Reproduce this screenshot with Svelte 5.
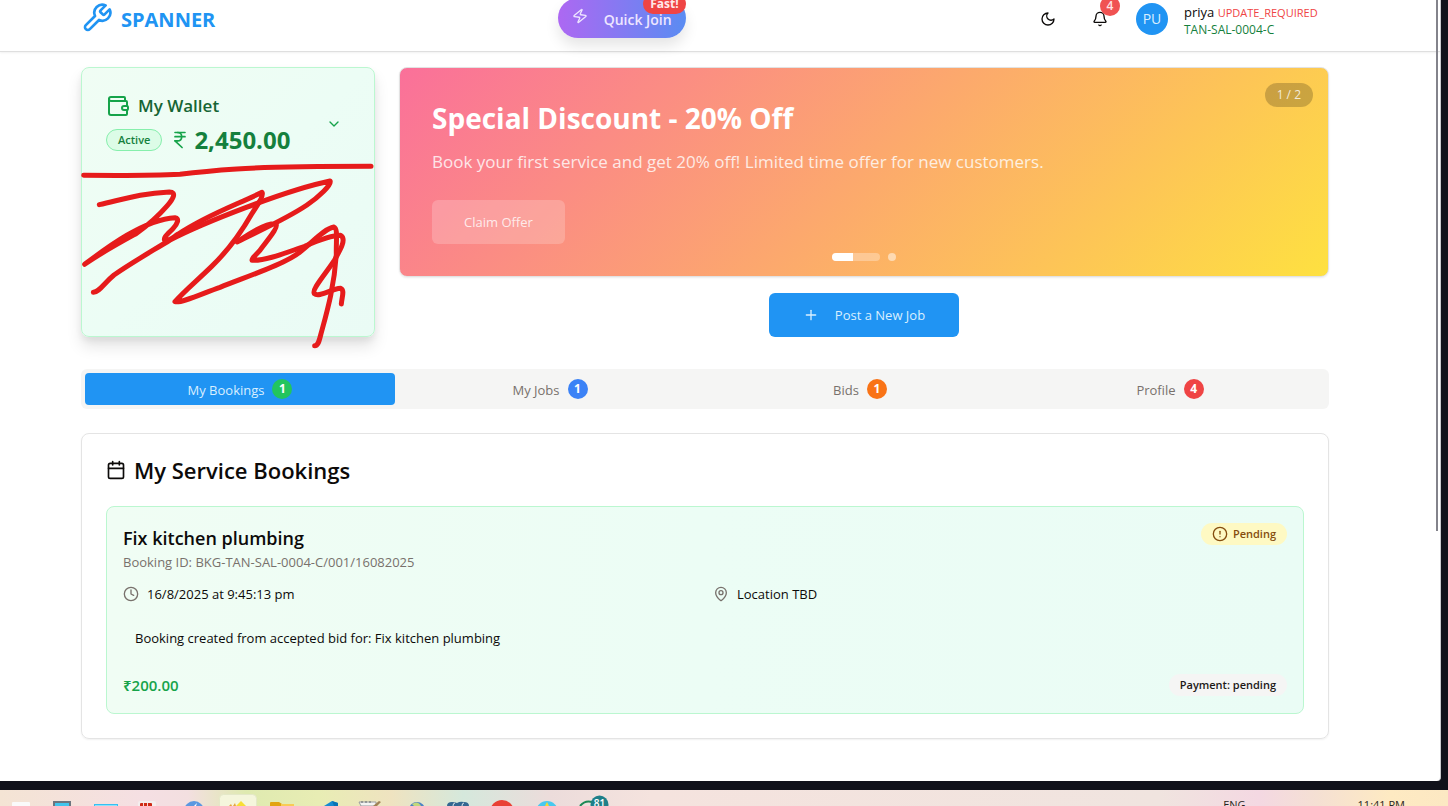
<script>
  const tabs = [
    { label: 'My Bookings', count: 1, tone: 'green' },
    { label: 'My Jobs', count: 1, tone: 'blue' },
    { label: 'Bids', count: 1, tone: 'orange' },
    { label: 'Profile', count: 4, tone: 'red' }
  ];
  let active = $state(0);

  const icons = {
    wrench: ['M14.7 6.3a1 1 0 0 0 0 1.4l1.6 1.6a1 1 0 0 0 1.4 0l3.77-3.77a6 6 0 0 1-7.94 7.94l-6.91 6.91a2.12 2.12 0 0 1-3-3l6.91-6.91a6 6 0 0 1 7.94-7.94l-3.76 3.76z'],
    zap: ['M4 14a1 1 0 0 1-.78-1.63l9.9-10.2a.5.5 0 0 1 .86.46l-1.92 6.02A1 1 0 0 0 13 10h7a1 1 0 0 1 .78 1.63l-9.9 10.2a.5.5 0 0 1-.86-.46l1.92-6.02A1 1 0 0 0 11 14z'],
    moon: ['M12 3a6 6 0 0 0 9 9 9 9 0 1 1-9-9Z'],
    bell: ['M10.268 21a2 2 0 0 0 3.464 0', 'M3.262 15.326A1 1 0 0 0 4 17h16a1 1 0 0 0 .74-1.673C19.41 13.956 18 12.499 18 8A6 6 0 0 0 6 8c0 4.499-1.411 5.956-2.738 7.326'],
    wallet: ['M19 7V4a1 1 0 0 0-1-1H5a2 2 0 0 0 0 4h15a1 1 0 0 1 1 1v4h-3a2 2 0 0 0 0 4h3a1 1 0 0 0 1-1v-2a1 1 0 0 0-1-1', 'M3 5v14a2 2 0 0 0 2 2h15a1 1 0 0 0 1-1v-4'],
    rupee: ['M6 3h12', 'M6 8h12', 'm6 13 8.5 8', 'M6 13h3', 'M9 13c6.667 0 6.667-10 0-10'],
    chevron: ['m6 9 6 6 6-6'],
    plus: ['M5 12h14', 'M12 5v14'],
    calendar: ['M8 2v4', 'M16 2v4', 'M5 4h14a2 2 0 0 1 2 2v14a2 2 0 0 1-2 2H5a2 2 0 0 1-2-2V6a2 2 0 0 1 2-2z', 'M3 10h18'],
    clock: ['M12 2a10 10 0 1 0 0 20 10 10 0 1 0 0-20', 'M12 6v6l4 2'],
    pin: ['M20 10c0 4.993-5.539 10.193-7.399 11.799a1 1 0 0 1-1.202 0C9.539 20.193 4 14.993 4 10a8 8 0 0 1 16 0', 'M12 7a3 3 0 1 0 0 6 3 3 0 1 0 0-6'],
    alert: ['M12 2a10 10 0 1 0 0 20 10 10 0 1 0 0-20', 'M12 8v4', 'M12 16h.01']
  };
</script>

{#snippet icon(name, size)}
  <svg class="icon" width={size} height={size} viewBox="0 0 24 24" aria-hidden="true">
    {#each icons[name] as d}<path {d} />{/each}
  </svg>
{/snippet}

<div class="screen">
  <div class="window">
    <div class="thumb"></div>
    <header>
      <a class="brand" href="#home">{@render icon('wrench', 32)}<span>SPANNER</span></a>
      <button class="quick">
        <span class="bolt">{@render icon('zap', 16)}</span>
        <span class="quick-label">Quick Join</span>
        <span class="fast">Fast!</span>
      </button>
      <div class="actions">
        <button class="square" aria-label="Toggle theme">{@render icon('moon', 16)}</button>
        <button class="square" aria-label="Notifications">{@render icon('bell', 16)}<span class="notif">4</span></button>
        <button class="user">
          <span class="avatar">PU</span>
          <span class="who">
            <span class="name">priya <span class="required">UPDATE_REQUIRED</span></span>
            <span class="uid">TAN-SAL-0004-C</span>
          </span>
        </button>
      </div>
    </header>

    <main>
      <div class="top">
        <section class="wallet">
          <div class="wallet-head">
            <div>
              <h2>{@render icon('wallet', 24)}<span>My Wallet</span></h2>
              <div class="balance">
                <span class="pill active-pill">Active</span>
                {@render icon('rupee', 20)}
                <strong>2,450.00</strong>
              </div>
            </div>
            <button class="expand" aria-label="Expand wallet">{@render icon('chevron', 16)}</button>
          </div>
          <svg class="ink" viewBox="81 67 294 270" aria-hidden="true">
            <g transform="translate(70 155) scale(.33333)">
              <path d="M41 61C150 62 250 62 330 58C400 49 440 46 500 42C580 36 680 34 903 34" />
              <path d="M88 149C160 133 210 115 298 111C322 111 308 134 292 152C265 183 240 206 200 235C140 268 92 294 44 328C100 286 220 193 315 188C329 190 323 207 308 222C292 238 278 249 285 257C297 258 310 246 325 237C410 180 500 149 576 112C583 120 562 151 545 177C518 224 471 290 425 334C382 376 342 409 315 440C334 445 400 414 450 397C540 361 647 326 690 291C728 262 761 222 792 216C804 220 798 257 799 298C792 401 770 473 752 540C747 560 744 572 734 572" />
              <path d="M70 412C90 410 98 388 132 360C188 321 245 289 300 255C400 203 650 105 780 78C788 87 745 127 711 150C650 191 573 225 501 261C540 235 577 209 617 205C628 214 598 249 575 279C565 296 545 306 546 316C590 317 650 292 704 274C750 254 787 241 812 241C830 252 812 283 793 316C765 359 724 404 733 416C747 428 783 402 812 400C825 405 815 429 814 447" />
            </g>
          </svg>
        </section>

        <div class="promo-col">
          <section class="promo">
            <h1>Special Discount - 20% Off</h1>
            <p>Book your first service and get 20% off! Limited time offer for new customers.</p>
            <button class="claim">Claim Offer</button>
            <span class="page-count">1 / 2</span>
            <div class="dots"><span class="bar"><span></span></span><span class="dot"></span></div>
          </section>
          <button class="post">{@render icon('plus', 16)}<span>Post a New Job</span></button>
        </div>
      </div>

      <div class="tabs" role="tablist">
        {#each tabs as tab, i}
          <button role="tab" aria-selected={active === i} class:selected={active === i} onclick={() => (active = i)}>
            <span class="tab-label">{tab.label}</span><span class="count {tab.tone}">{tab.count}</span>
          </button>
        {/each}
      </div>

      <section class="bookings">
        <h2>{@render icon('calendar', 20)}<span>My Service Bookings</span></h2>
        <article>
          <div class="row">
            <div>
              <h3>Fix kitchen plumbing</h3>
              <p class="bid">Booking ID: BKG-TAN-SAL-0004-C/001/16082025</p>
            </div>
            <span class="pill pending">{@render icon('alert', 16)}Pending</span>
          </div>
          <div class="facts">
            <span>{@render icon('clock', 16)}16/8/2025 at 9:45:13 pm</span>
            <span>{@render icon('pin', 16)}Location TBD</span>
          </div>
          <p class="note">Booking created from accepted bid for: Fix kitchen plumbing</p>
          <div class="row foot">
            <strong>₹200.00</strong>
            <span class="pill payment">Payment: pending</span>
          </div>
        </article>
      </section>
    </main>
  </div>

  <footer>
    <svg class="apps" width="640" height="16" viewBox="0 790 640 16" aria-hidden="true">
      <rect x="12" y="802" width="18" height="8" rx="1" fill="#fafafa" />
      <rect x="53" y="801" width="18" height="8" fill="#6c757f" /><rect x="55" y="803" width="14" height="6" fill="#42c5ed" />
      <rect x="94" y="804" width="24" height="5" fill="#36c0f2" /><rect x="95" y="805" width="22" height="3" fill="#8de2fb" />
      <rect x="138" y="801" width="18" height="9" rx="2" fill="#f4eeee" />
      <path d="M140 806v-2q0-1 1-1h10q1 0 1 1v2z" fill="#cf2a15" /><path d="M143.500 803v3M147.500 803v3" stroke="#f6d7d2" />
      <circle cx="194" cy="811" r="10" fill="#5c98e0" /><path d="M194 806l3-3-1 3z" fill="#fff" />
      <rect x="219.500" y="794.500" width="37" height="20" rx="4" fill="#f5f6dc" stroke="#e4e8c8" />
      <path d="M229 806l2-2 1 2zM233 806l2-3 1 3z" fill="#e8a33b" /><path d="M236 806l5-5 5 5z" fill="#f8de35" />
      <path d="M270 806v-3q0-1 1-1h8l3 2h12v2z" fill="#e2a411" /><path d="M281 804h13v2h-13z" fill="#f8cc55" />
      <path d="M324 806l8-5 6 2v3z" fill="#168bd2" /><path d="M332 801l6 2v3h-4z" fill="#0873b5" />
      <path d="M359 802h17v4h-15z" fill="#f4f4f2" stroke="#9a9da0" /><path d="M362 801v2M366 801v2M370 801v2" stroke="#656b70" /><path d="M373 806l6-5 2 1-4 4z" fill="#a18255" />
      <circle cx="417" cy="810" r="8" fill="#4c83c5" /><path d="M412 804q6-4 9 2h-7z" fill="#c2d77c" />
      <path d="M447 806q0-4 5-4 3 0 5 1 3-2 7-1 5 0 5 4z" fill="#336791" /><path d="M453 806q0-3 2-3M464 803q-2 0-2 3" fill="none" stroke="#dbe6ec" />
      <circle cx="502" cy="812" r="12" fill="#e94135" />
      <circle cx="547" cy="812" r="11" fill="#48c9ef" /><path d="M545 806l2-4 2 4z" fill="#f9d72f" />
      <path d="M580 806q5-6 12-4" fill="none" stroke="#1c8956" stroke-width="2" />
      <circle cx="599.500" cy="804.500" r="9" fill="#1f7f89" />
      <text x="599.500" y="807" text-anchor="middle" font-size="10" font-weight="600" fill="#fff">81</text>
    </svg>
    <div class="tray"><span>ENG</span><span>11:41 PM</span></div>
  </footer>
</div>

<style>
  :global(body) { margin: 0; background: #10111a; }
  * { box-sizing: border-box; }
  h1, h2, h3, p { margin: 0; }
  button { font: inherit; color: inherit; border: 0; background: none; padding: 0; cursor: pointer; }
  .screen {
    min-height: 100vh; display: flex; flex-direction: column; overflow: hidden;
    font: 13px/20px 'Open Sans', 'Noto Sans', sans-serif; color: #0c0a09; background: #10111a;
  }
  .icon { display: block; flex: none; fill: none; stroke: currentColor; stroke-width: 2; stroke-linecap: round; stroke-linejoin: round; }
  .window { position: relative; flex: 1; margin: 0 7px 9px 0; background: #fff; border-radius: 0 0 4px 0; border-right: 1px solid #c8c8cc; overflow: hidden; }
  .thumb { position: absolute; z-index: 2; right: 2px; top: 0; width: 2px; height: 68%; background: #83838b; }

  header { display: flex; justify-content: space-between; align-items: center; margin-top: -2px; padding: 0 111px 13px 81px; border-bottom: 1px solid #dfdfdf; box-shadow: 0 1px 2px rgba(0, 0, 0, .06); }
  .brand { display: flex; align-items: center; gap: 8px; color: #2094f3; text-decoration: none; font-size: 20px; font-weight: 700; }
  .brand span { padding-top: 4px; }
  .quick { position: relative; display: flex; align-items: center; gap: 16px; height: 40px; padding: 0 14px; border-radius: 20px; background: linear-gradient(90deg, #ad68f2, #5a8cf2); color: #eee6ff; font-size: 14px; font-weight: 600; box-shadow: 0 8px 14px rgba(0, 0, 0, .1); }
  .quick-label { padding-top: 3px; }
  .bolt { transform: rotate(7deg); margin-top: -5px; }
  .fast { position: absolute; right: 0; top: -4px; padding: 0 7px; border-radius: 10px; background: #ef4444; color: #ffe9e9; font-size: 12px; font-weight: 700; line-height: 20px; }
  .actions { display: flex; align-items: center; gap: 12px; margin: 1px 0 -1px; }
  .square { position: relative; display: grid; place-items: center; width: 40px; height: 40px; }
  .notif { position: absolute; right: 0; top: -3px; width: 20px; height: 20px; border-radius: 10px; background: #f05252; color: #ffe3e3; font-size: 12px; font-weight: 600; }
  .user { display: flex; align-items: center; gap: 16px; padding: 0 8px 0 4px; text-align: left; }
  .avatar { display: grid; place-items: center; width: 32px; height: 32px; border-radius: 50%; background: #2094f3; color: #d9efff; font-size: 14px; }
  .who { display: flex; flex-direction: column; min-width: 137px; padding-top: 3px; line-height: 17px; }
  .name { font-size: 13px; }
  .required { color: #ef4444; font-size: 11px; }
  .uid { color: #15803d; font-size: 12px; }

  main { padding: 15px 111px 42px 81px; }
  .top { display: grid; grid-template-columns: repeat(4, 1fr); gap: 24px; }
  .wallet { position: relative; padding: 24px; border: 1px solid #bbf7d0; border-radius: 8px; background: linear-gradient(135deg, #f0fdf4, #ecfdf5 50%, #eafbf5); box-shadow: 0 10px 15px rgba(0, 0, 0, .1), 0 4px 6px rgba(0, 0, 0, .06); }
  .wallet-head { display: flex; align-items: center; justify-content: space-between; color: #16a34a; }
  .wallet h2 { display: flex; align-items: center; gap: 8px; margin-bottom: 4px; font-size: 17px; line-height: 28px; font-weight: 600; }
  .wallet h2 span { color: #166534; }
  .balance { display: flex; align-items: center; gap: 8px; }
  .balance strong { margin-left: -4px; color: #15803d; font-size: 24px; line-height: 32px; font-weight: 700; }
  .pill { display: inline-flex; align-items: center; gap: 5px; height: 22px; padding: 0 11px; border-radius: 11px; font-size: 11px; font-weight: 600; white-space: nowrap; }
  .active-pill { border: 1px solid #86efac; background: #dcfce7; color: #15803d; }
  .expand { display: grid; place-items: center; width: 32px; height: 32px; }
  .ink { position: absolute; left: -1px; top: -1px; width: 294px; height: 270px; overflow: visible; z-index: 1; pointer-events: none; fill: none; stroke: #e61b1b; stroke-width: 15; stroke-linecap: round; stroke-linejoin: round; }

  .promo-col { grid-column: span 3; display: flex; flex-direction: column; align-items: center; gap: 16px; }
  .promo { position: relative; width: 100%; padding: 32px; border: 1px solid #e2e2e2; border-radius: 8px; background: linear-gradient(135deg, #fa709a, #fee140) border-box; color: #fff; box-shadow: 0 1px 2px rgba(0, 0, 0, .08); }
  .promo h1 { margin-bottom: 12px; font-size: 28px; line-height: 36px; font-weight: 700; }
  .promo p { margin-bottom: 24px; font-size: 17px; line-height: 28px; opacity: .8; }
  .claim { height: 44px; padding: 0 32px; border-radius: 6px; background: rgba(255, 255, 255, .2); color: rgba(255, 255, 255, .8); display: block; }
  .page-count { position: absolute; right: 15px; top: 15px; padding: 0 12px; border-radius: 12px; background: rgba(0, 0, 0, .2); color: rgba(255, 255, 255, .8); font-size: 12px; line-height: 24px; }
  .dots { position: absolute; left: 0; right: 0; bottom: 15px; display: flex; justify-content: center; gap: 8px; }
  .bar { width: 48px; height: 8px; border-radius: 4px; background: rgba(255, 255, 255, .3); overflow: hidden; }
  .bar span { display: block; width: 44%; height: 100%; background: #fff; }
  .dot { width: 8px; height: 8px; border-radius: 4px; background: rgba(255, 255, 255, .5); }
  .post { display: flex; align-items: center; justify-content: center; gap: 16px; min-width: 190px; height: 44px; padding: 0 32px; border-radius: 6px; background: #2094f3; color: #d9efff; }

  .tabs { display: grid; grid-template-columns: repeat(4, 1fr); margin: 32px 0 24px; padding: 4px; border-radius: 6px; background: #f5f5f4; color: #78716c; }
  .tabs button { display: flex; align-items: center; justify-content: center; gap: 8px; height: 32px; border-radius: 4px; }
  .tabs .selected { background: #2094f3; color: #d9efff; }
  .tab-label { padding-top: 2px; }
  .count { width: 20px; height: 20px; border-radius: 50%; color: #fff; font-size: 12px; font-weight: 700; text-align: center; }
  .green { background: #22c55e; }
  .blue { background: #3b82f6; }
  .orange { background: #f97316; }
  .red { background: #ef4444; }

  .bookings { padding: 24px; border: 1px solid #e4e4e4; border-radius: 8px; box-shadow: 0 1px 2px rgba(0, 0, 0, .06); }
  .bookings h2 { display: flex; align-items: center; gap: 8px; margin-bottom: 24px; font-size: 22px; line-height: 24px; font-weight: 600; }
  article { padding: 16px; border: 1px solid #bbf7d0; border-radius: 8px; background: linear-gradient(90deg, #f0fdf4, #ecfdf5 50%, #eafcf5); }
  .row { display: flex; justify-content: space-between; align-items: flex-start; }
  h3 { font-size: 18px; line-height: 30px; font-weight: 600; }
  .bid { line-height: 18px; color: #78716c; }
  .pending { background: #fef9c3; color: #854d0e; }
  .facts { display: grid; grid-template-columns: 1fr 1fr; gap: 16px; margin: 13px 0 12px; }
  .facts span { display: flex; align-items: center; gap: 8px; }
  .facts .icon { color: #78716c; }
  .note { margin-bottom: 13px; padding: 12px; }
  .foot { align-items: center; line-height: 24px; }
  .foot strong { color: #16a34a; font-size: 15px; line-height: 22px; font-weight: 600; }
  .foot { min-height: 24px; }
  .payment { background: #f5f5f4; color: #1c1917; }

  footer { display: flex; justify-content: space-between; height: 16px; overflow: hidden; background: linear-gradient(90deg, #f4e4d4, #f5dfe3 10%, #f3dfe0 13%, #dfeab0 17%, #e8edb4 22%, #efe3c0 27%, #d5e8dc 32%, #ecdcdb 38%, #f5e3de 45%, #f0e4df 80%, #f4d8e2 87%, #f5e0d3 91%, #feeac2 96%, #fce8c3); }
  .apps { flex: none; }
  .tray { display: flex; gap: 112px; padding: 7px 43px 0 0; color: #2a2520; font-size: 11px; line-height: 16px; white-space: nowrap; }
</style>
